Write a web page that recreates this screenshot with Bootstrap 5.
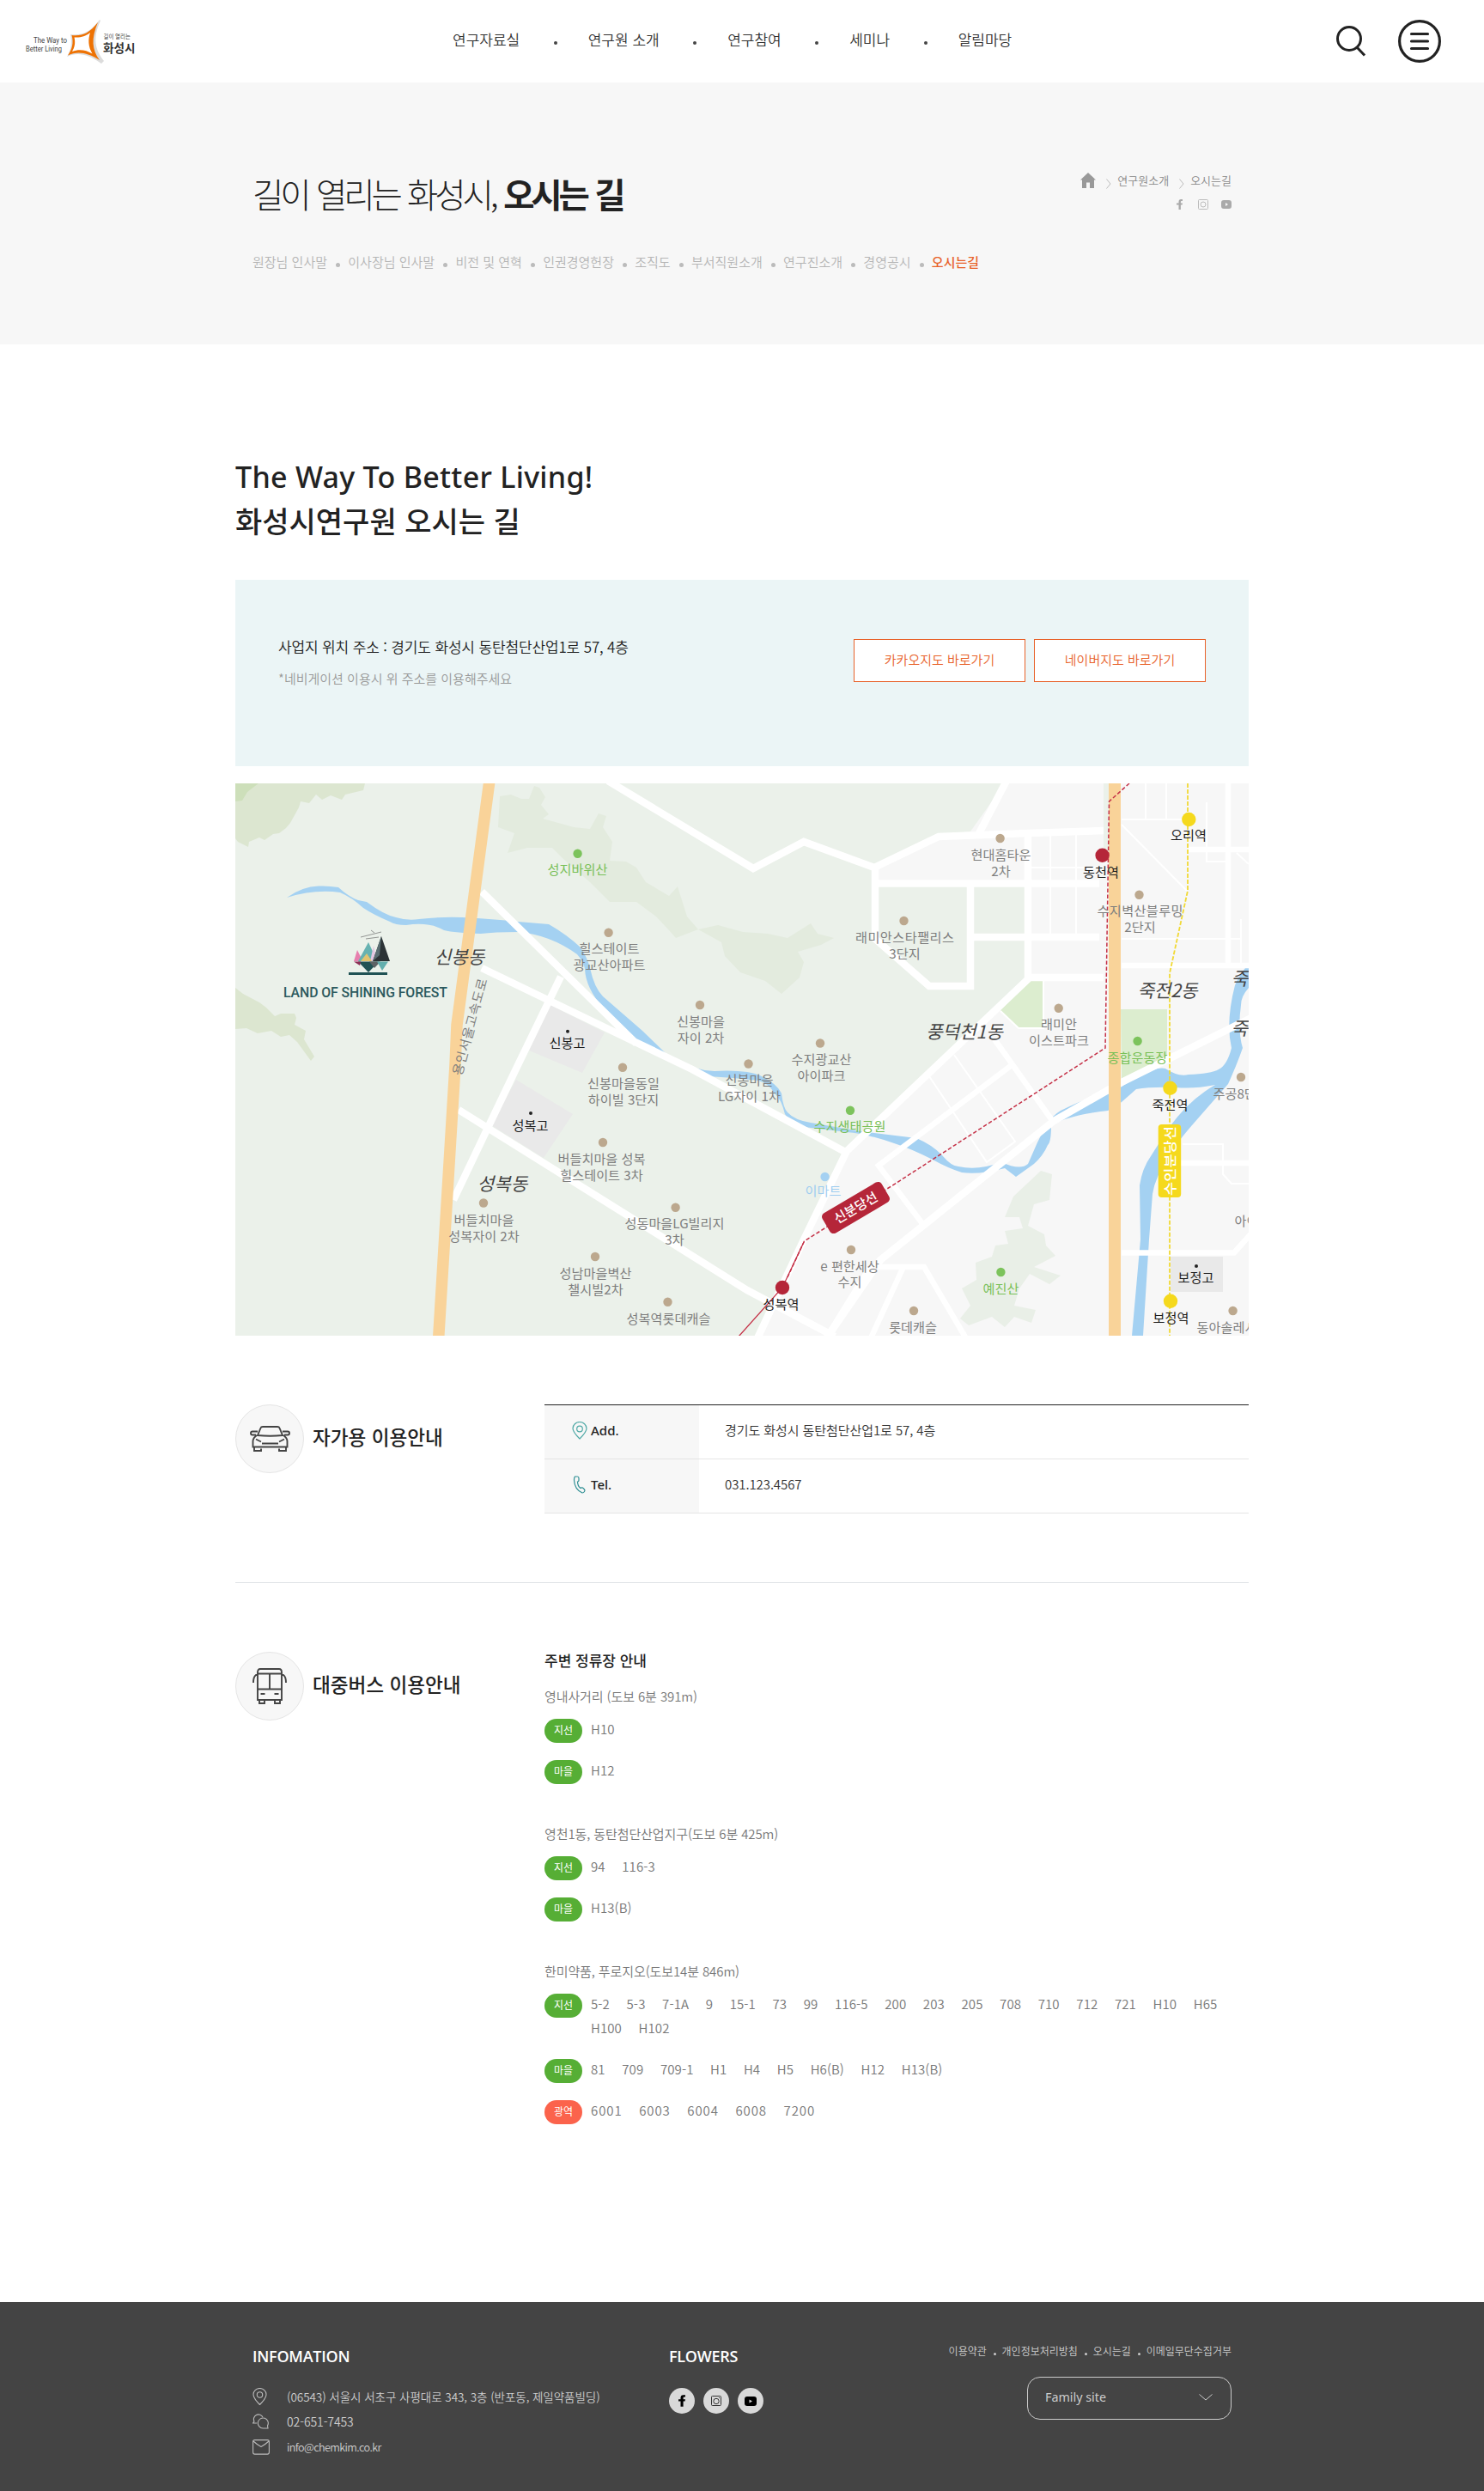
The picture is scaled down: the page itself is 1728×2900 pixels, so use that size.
<!DOCTYPE html>
<html lang="ko">
<head>
<meta charset="utf-8">
<meta name="viewport" content="width=device-width, initial-scale=1">
<title>화성시연구원 - 오시는 길</title>
<link href="https://cdn.jsdelivr.net/npm/bootstrap@5.3.0/dist/css/bootstrap.min.css" rel="stylesheet">
<style>
body{font-family:"Noto Sans CJK KR","Noto Sans",sans-serif;font-weight:350;font-size:15px;line-height:28px;color:#222;background:#fff}
a{color:inherit;text-decoration:none}
svg{display:block;flex:none}
.site-head{height:96px;padding:0 50px 0 28px}
.main-nav{margin:0 0 4px 367px;font-size:17px;color:#333}
.main-nav li+li:before,.sub-nav li+li:before{content:"";display:inline-block;border-radius:50%;vertical-align:middle}
.main-nav li+li:before{width:4px;height:4px;background:#444;margin:4px 36px 0 39.5px}
.hero{height:305px;background:#f7f7f7}
.inner{width:1140px}
.page{width:1180px}
.hero h1{font-size:39.5px;line-height:60px;font-weight:300;letter-spacing:-4.1px;word-spacing:2.5px;color:#222}
.hero h1 b{font-weight:700}
.sub-nav{color:#b5b5b5;margin-top:36px}
.sub-nav li+li:before{width:5px;height:5px;background:#bbb;margin:3px 9.3px 0 10px}
.sub-nav .on{color:#e8622a;font-weight:500}
.sub-nav .on:before{background:#bbb}
.crumbs{font-size:13px;line-height:20px;color:#888}
.lead-title{font-size:34px;line-height:50.5px;font-weight:500;padding-top:128px}
.lead-title .en{font-family:"Noto Sans",sans-serif;letter-spacing:.28px}
.addr{height:217px;background:#ebf5f6;padding:0 50px;margin-top:44px}
.addr .line1{font-size:17px;letter-spacing:-.15px}
.addr .line2{color:#999}
.btn-map{width:200px;height:50px;border:1px solid #e8622a;border-radius:0;background:#fff;color:#e8622a;font-size:15px;line-height:46px;padding:0;font-weight:350}
.btn-map:hover{background:#e8622a;color:#fff}
.map-view text{font-size:15.2px;fill:#7e7e7e;text-anchor:middle;font-weight:400}
.map-view .g{fill:#79c058}
.map-view .k{fill:#1d1d1d}
.map-view .d{font-size:21.2px;fill:#444;font-style:italic}
.map-view .w{fill:#fff;font-weight:500}
.map-view .s{text-anchor:start}
.way{width:360px;flex:none}
.way .disc{width:80px;height:80px;border-radius:50%;background:#f7f7f7;border:1px solid #e5e5e5;flex:none}
.way h3{font-size:22.6px;line-height:30px;font-weight:500;margin:0 0 5px 10px}
.info-row{height:63px;border-bottom:1px solid #e5e5e5;line-height:58px}
.info-row:first-child{height:64px;border-top:1px solid #222}
.info-row .lab{width:180px;background:#f7f7f7;padding:0 0 4px 32px;font-weight:500;font-family:"Noto Sans",sans-serif}
.info-row .val{padding-left:30px;color:#333;letter-spacing:-.08px}
.stops{color:#777}
.stops h4{font-size:17px;line-height:26px;font-weight:500;color:#222;margin:-3px 0 0}
.stops p{margin:15px 0 12px;line-height:28px;letter-spacing:-.1px}
.bus-row{margin-bottom:20px}
.tag{width:44px;height:28px;border-radius:14px;background:#56ae35;color:#fff;font-size:12px;line-height:25px;text-align:center;margin-right:10px;flex:none;font-weight:400}
.tag.red{background:#fb634c}
.bus-row ul{line-height:28px;margin:-2px 0 2px;column-gap:19.6px;letter-spacing:.1px}
.bus-row .wide{letter-spacing:.9px}
.site-foot{height:220px;background:#444;color:#ccc}
.site-foot h5{font-family:"Open Sans","Noto Sans",sans-serif;font-size:18px;line-height:24px;font-weight:600;color:#fff;letter-spacing:-.25px}
.foot-col1{width:485px;padding-top:51px}
.foot-col2{padding-top:51px}
.foot-col1 li{height:29.5px;line-height:28px}
.foot-col1 li svg{width:20px;margin-right:20px}
.sns{width:30px;height:30px;border-radius:50%;background:#d9d9d9}
.foot-links{font-size:12px;line-height:20px;margin-top:47px}
.foot-links li+li:before{content:"";display:inline-block;width:3px;height:3px;border-radius:50%;background:#ccc;margin:4px 6.900px 0 7.900px;vertical-align:middle}
.family{width:238px;height:50px;border:1px solid #ccc;border-radius:15px;padding:0 21px 2px 20px;font-family:"Noto Sans",sans-serif;font-size:14.3px;font-weight:400;margin-top:20px}
</style>
</head>
<body>
<header class="site-head d-flex align-items-center bg-white">
  <a href="#"><svg width="132" height="56" viewBox="28 20 132 56" font-family="Roboto,'Noto Sans CJK KR',sans-serif">
    <path d="M116 23C104 39 95 41 82 40C84 50 83 58 78 66C90 60 103 63 118 74L121 71C110 57 108 43 117 24Z" fill="#dcdcdc"/>
    <path d="M114 26C103 40 95 42 83.500 41C86 50 84 57 79 64.500C90 59 102 61 116 70C107 58 106 45 114 26Z" fill="#ee7203"/>
    <path d="M105 38C99 42.500 94 44 86.500 43.500C88 50 87 55 84 60C92 57 100 58 107.500 62.500C102.500 54 102.500 46 105 38Z" fill="#fff"/>
    <text x="39" y="49.500" font-size="8.500" font-weight="400" fill="#444" textLength="39" lengthAdjust="spacingAndGlyphs">The Way to</text>
    <text x="30" y="59.500" font-size="8.500" font-weight="400" fill="#444" textLength="42" lengthAdjust="spacingAndGlyphs">Better Living</text>
    <text x="120.500" y="44.500" font-size="7" fill="#444" textLength="31.500" lengthAdjust="spacingAndGlyphs" font-weight="400">길이 열리는</text>
    <text x="120" y="61" font-size="13.500" fill="#333" textLength="37.500" lengthAdjust="spacingAndGlyphs" font-weight="700">화성시</text>
  </svg></a>
  <ul class="main-nav list-unstyled d-flex"><li>연구자료실</li><li>연구원 소개</li><li>연구참여</li><li>세미나</li><li>알림마당</li></ul>
  <div class="d-flex align-items-center ms-auto" style="gap:37px">
    <svg width="36" height="38" viewBox="1555 29 36 38" fill="none" stroke="#222" stroke-width="3"><circle cx="1571" cy="45" r="13.500"/><path d="M1580 55l9 9.500"/></svg>
    <svg width="50" height="50" viewBox="0 0 50 50" fill="none" stroke="#222" stroke-width="3.200"><circle cx="25" cy="25" r="23.400"/><path d="M15.500 16.500h19M15.500 25h19M15.500 33.500h19" stroke-linecap="round"/></svg>
  </div>
</header>

<section class="hero">
  <div class="inner mx-auto d-flex justify-content-between">
    <div style="padding-top:99px">
      <h1 class="mb-0">길이 열리는 화성시, <b>오시는 길</b></h1>
      <ul class="sub-nav list-unstyled d-flex mb-0"><li>원장님 인사말</li><li>이사장님 인사말</li><li>비전 및 연혁</li><li>인권경영헌장</li><li>조직도</li><li>부서직원소개</li><li>연구진소개</li><li>경영공시</li><li class="on">오시는길</li></ul>
    </div>
    <div style="padding-top:104px">
      <div class="crumbs d-flex align-items-center">
        <svg width="18" height="18" viewBox="0 0 18 18" fill="#999"><path d="M9 0L18 8.500H16V18H11V11.500H7V18H2V8.500H0Z"/></svg>
        <svg class="mt-2" style="margin:0 7px 0 12px" width="6" height="12" viewBox="0 0 6 12" fill="none" stroke="#bbb"><path d="M.5.500L5 6L.5 11.500"/></svg>
        <span>연구원소개</span>
        <svg class="mt-2" style="margin:0 7px 0 12px" width="6" height="12" viewBox="0 0 6 12" fill="none" stroke="#bbb"><path d="M.5.500L5 6L.5 11.500"/></svg>
        <span>오시는길</span>
      </div>
      <div class="d-flex justify-content-end" style="margin-top:12px">
        <svg width="64" height="12" viewBox="0 0 64 12" fill="#aaa"><path d="M2.500 12V6.500H0V4.500H2.500V3Q2.500 0 5 0H7V2H5.700Q4.900 2 4.900 3V4.500H7L6.600 6.500H4.900V12Z"/><g fill="none" stroke="#bbb"><rect x="25.500" y=".5" width="11" height="11" rx="1"/><circle cx="31" cy="6" r="3"/></g><rect x="52" y="1" width="12" height="10" rx="3"/><path d="M57 4l3 2l-3 2z" fill="#f7f7f7"/></svg>
      </div>
    </div>
  </div>
</section>

<main class="page mx-auto">
  <h2 class="lead-title mb-0"><span class="en">The Way To Better Living!</span><br>화성시연구원 오시는 길</h2>
  <div class="addr d-flex justify-content-between">
    <div style="padding-top:64px"><div class="line1">사업지 위치 주소 : 경기도 화성시 동탄첨단산업1로 57, 4층</div><div class="line2" style="margin-top:9px">*네비게이션 이용시 위 주소를 이용해주세요</div></div>
    <div class="d-flex" style="gap:10px;padding-top:69px"><a class="btn btn-map" href="#">카카오지도 바로가기</a><a class="btn btn-map" href="#">네이버지도 바로가기</a></div>
  </div>

  <svg class="map-view" style="margin-top:20px" width="1180" height="643" viewBox="274 912 1180 643">
    <rect x="274" y="912" width="1180" height="643" fill="#f7f7f7"/>
    <path fill="#ebf1ea" d="M274 912H1170L1130 968L1093 972L1017 1008V1030H1194L1200 1140L985 1340L936 1443L883 1555H274ZM1285 912H1291V1000H1285Z"/>
    <path fill="#dce6d0" d="M274 912H425L423 920L402 925L398 931L385 926L375 931L368 925L360 935L350 933L348 940L338 958L333 964L325 970L318 971L308 978L302 975L290 980L289 986L277 980L274 976ZM274 1150L283 1157L302 1167L310 1173L320 1183L327 1180L343 1180L345 1185L343 1193L356 1200L354 1210L366 1230L362 1235L346 1213L337 1205L327 1207L316 1200L300 1203L287 1197L274 1198Z"/>
    <path fill="#cddfba" d="M274 912H301L288 922L282 932L274 933Z"/>
    <path fill="#e3ebde" d="M582 927L595 925L607 930L616 930L622 915L628 917L635 928L630 937L639 948L632 953L668 963L687 965L697 947L706 950L702 963L713 980L710 1002L729 1003L741 1010L752 1027L779 1043L789 1032L800 1067L813 1082L787 1092L779 1083L764 1067L741 1050L710 1050L687 1027L656 1000L643 987L614 987L591 993L599 970L580 963ZM813 1082L836 1077L865 1085L894 1087L917 1092L944 1075L952 1087L971 1092L956 1100L929 1108L936 1120L931 1138L910 1157L891 1142L862 1132L844 1113L840 1097Z"/>
    <path fill="#e9efe7" d="M1212 1363L1225 1367L1222 1397L1204 1402L1197 1427L1216 1437L1218 1450L1229 1462L1204 1475L1235 1485L1222 1495L1199 1483L1187 1500L1181 1520L1206 1525L1201 1540L1181 1533L1170 1545L1155 1533L1128 1543L1118 1535L1130 1520L1120 1500L1137 1490L1136 1470L1155 1463L1159 1450L1174 1448L1170 1433L1191 1430L1187 1417L1170 1417L1180 1393L1197 1377Z"/>
    <path fill="#e9e9e9" d="M641 1170L704 1202L678 1249L616 1223ZM601 1257L667 1297L633 1348L572 1310ZM1363 1463H1424V1504H1363Z"/>
    <path fill="#dcedcf" d="M1200 1142H1214V1196H1185L1165 1176ZM1305 1175H1359V1235L1306 1262Z"/>
    <path fill="#a4d1f2" d="M334 1045Q352 1032 371 1031.500Q382 1031 394 1033Q406 1044 417 1048L427 1050Q447 1065 461 1068Q474 1072 488 1070Q515 1067 538 1068Q575 1070 603 1073L639 1076Q660 1088 676 1103Q684 1115 687 1127Q692 1150 702 1160L748 1200L779 1230Q806 1246 832 1247Q870 1245 887 1253Q905 1262 910 1273Q912 1290 917 1295Q925 1304 944 1307L1002 1317L1067 1325Q1086 1333 1097 1345Q1108 1358 1116 1358Q1139 1363 1166 1353Q1188 1363 1197 1355L1208 1330L1218 1310Q1225 1299 1235 1293Q1266 1277 1290 1273L1306 1265Q1320 1256 1327 1253Q1348 1241 1357 1244Q1372 1254 1384 1251Q1410 1250 1419 1245Q1429 1240 1434 1220Q1427 1190 1438 1147Q1443 1135 1454 1122V1150Q1445 1160 1445 1170Q1441 1200 1447 1220Q1440 1240 1430 1262L1388 1310Q1368 1333 1361 1347Q1345 1370 1342 1390L1338 1443L1331 1555H1318L1328 1443L1327 1380Q1330 1360 1340 1346L1361 1313Q1385 1280 1415 1263Q1390 1268 1369 1266Q1340 1265 1323 1268Q1314 1276 1306 1283L1290 1293Q1245 1298 1224 1310Q1224 1330 1220 1333Q1215 1345 1204 1355L1183 1370L1170 1360Q1140 1368 1120 1365Q1104 1360 1086 1350Q1060 1337 1044 1332Q1010 1320 986 1318L936 1312Q918 1305 914 1297Q910 1280 902 1273Q895 1261 883 1258Q850 1254 821 1253Q800 1247 787 1238L741 1212L702 1173Q682 1150 681 1128Q680 1120 672 1111Q640 1088 603 1085Q575 1085 560 1087Q530 1086 517 1083Q500 1073 473 1077Q460 1077 454 1073Q435 1065 423 1057Q410 1045 396 1039Q366 1035 334 1045Z"/>
    <g fill="none" stroke="#fff" stroke-width="8.500">
      <path d="M708 909L877 1011L936 980L1018 1010L1093 974L1197 970L1285 967M1172 909L1139 972M1019 1010V1093L1082 1148H1130V1028M1019 1028.500H1280M1130 1091H1280M1197 970V1138H1285M1199 1138L986 1340L936 1443L881 1560"/>
      <path d="M561 1038L741 1215M561 1127L729 1208L806 1245L986 1342M653 1137L603 1240L568 1313L528 1397M534 1292L870 1502L972 1556"/>
      <path stroke-width="6.500" d="M1178 1240L1023 1357L1076 1427M1158 1210L1227 1307M1013 1475H1076L1126 1560M1051 1477L1013 1560M1430 912V1121M1306 1124H1454M1384 989H1454M1306 1458.500H1437L1457 1436M1375 1354H1454M1013 1475L963 1556"/>
      <path d="M1457 1185L1306 1260L1227 1305L1025 1467L961 1560"/>
      <path stroke-width="2" d="M1223 970V1088M1253 970V1088M1197 1010H1285M1082 1253L1149 1353L1182 1329L1111 1228M1306 954H1384M1334 912V955M1358 912V955M1306 960L1382 1037M1405 934V1003H1428M1306 1093H1445V1122M1445 1070V1093M1440 993L1454 1006M1377 1332H1424V1367L1434 1378H1454M1215 1142V1197H1186L1165 1177"/>
    </g>
    <g fill="none"><path stroke="#f9d399" stroke-width="13.500" d="M570.500 905L532 1193L530 1240L510.500 1560"/><path stroke="#f9d399" stroke-width="14" d="M1298 912V1555"/>
    <path stroke="#c53147" stroke-width="1.500" stroke-dasharray="4.500 2.500" d="M1315 912L1291.500 933L1287 1220L1044 1377L936.500 1445L917 1487"/><path stroke="#c53147" stroke-width="1.300" d="M936 1446L911 1499L860 1556"/>
    <path stroke="#f1d934" stroke-width="1.800" stroke-dasharray="5 2" d="M1383 912V1037L1362 1133V1555"/></g>
    <g fill="#bca88e"><circle cx="708.600" cy="1085.700" r="5.200"/><circle cx="815" cy="1170" r="5.200"/><circle cx="725" cy="1242.700" r="5.200"/><circle cx="871.500" cy="1238.500" r="5.200"/><circle cx="702" cy="1330" r="5.200"/><circle cx="563" cy="1400.500" r="5.200"/><circle cx="786.600" cy="1405.700" r="5.200"/><circle cx="693" cy="1463" r="5.200"/><circle cx="777.500" cy="1515.700" r="5.200"/><circle cx="1164.600" cy="976" r="5.200"/><circle cx="1052.500" cy="1072" r="5.200"/><circle cx="955" cy="1214.500" r="5.200"/><circle cx="1232.700" cy="1173.700" r="5.200"/><circle cx="1326.500" cy="1041.700" r="5.200"/><circle cx="991" cy="1455" r="5.200"/><circle cx="1064" cy="1526" r="5.200"/><circle cx="1445" cy="1254" r="5.200"/><circle cx="1435.600" cy="1526" r="5.200"/></g>
    <g fill="#7cc35c"><circle cx="672.600" cy="993.700" r="5.200"/><circle cx="1324.600" cy="1212" r="5.200"/><circle cx="990" cy="1292.700" r="5.200"/><circle cx="1165.400" cy="1481" r="5.200"/></g>
    <circle cx="960.600" cy="1370" r="5.200" fill="#a4d1f2"/>
    <g fill="#b52639"><circle cx="1283.600" cy="995.700" r="8.200"/><circle cx="911" cy="1499" r="8.200"/><rect x="-40" y="-13.500" width="80" height="27" rx="5" transform="translate(996.500 1406) rotate(-30.500)"/></g>
    <g fill="#f5d91d"><circle cx="1384.300" cy="954" r="8.200"/><circle cx="1362.500" cy="1266.700" r="8.200"/><circle cx="1363" cy="1514.700" r="8.200"/><rect x="1348.700" y="1309" width="26.500" height="85" rx="4"/></g>
    <g fill="#222"><circle cx="661" cy="1200.700" r="2"/><circle cx="618" cy="1296" r="2"/><circle cx="1393" cy="1474" r="2"/></g>
    <g transform="translate(-.5 0)">
    <text class="g" x="673" y="1018">성지바위산</text>
    <text x="710" y="1109.500">힐스테이트</text><text x="710" y="1128.500">광교산아파트</text>
    <text x="816.500" y="1194.500">신봉마을</text><text x="816.500" y="1213.500">자이 2차</text>
    <text class="k" x="661" y="1219.500">신봉고</text>
    <text x="726.500" y="1267">신봉마을동일</text><text x="726.500" y="1286">하이빌 3단지</text>
    <text x="873" y="1262.500">신봉마을</text><text x="873" y="1281.500">LG자이 1차</text>
    <text class="k" x="618" y="1315.500">성복고</text>
    <text x="701" y="1354.500">버들치마을 성복</text><text x="701" y="1373.500">힐스테이트 3차</text>
    <text class="d" x="585.500" y="1385.500">성복동</text><text class="d" x="535.500" y="1122">신봉동</text>
    <text x="564" y="1425.500">버들치마을</text><text x="564" y="1444.500">성복자이 2차</text>
    <text x="786" y="1429.500">성동마을LG빌리지</text><text x="786" y="1448.500">3차</text>
    <text x="694" y="1487.500">성남마을벽산</text><text x="694" y="1507">챌시빌2차</text>
    <text x="779" y="1540.500">성복역롯데캐슬</text>
    <text transform="translate(553 1197) rotate(-75)" x="0" y="0" textLength="116">용인서울고속도로</text>
    <text x="1166" y="1000.500">현대홈타운</text><text x="1166" y="1019.500">2차</text>
    <text x="1054" y="1096.500" textLength="115">래미안스타팰리스</text><text x="1054" y="1115.500">3단지</text>
    <text x="957" y="1238.500">수지광교산</text><text x="957" y="1257.500">아이파크</text>
    <text x="1233.500" y="1198">래미안</text><text x="1233.500" y="1217">이스트파크</text>
    <text x="1328" y="1066" textLength="100">수지벽산블루밍</text><text x="1328" y="1085">2단지</text>
    <text class="k" x="1384.500" y="978">오리역</text><text class="k" x="1282.500" y="1020.500">동천역</text>
    <text class="d" x="1360" y="1160.500">죽전2동</text><text class="d" x="1123.500" y="1209">풍덕천1동</text>
    <text class="g" x="1325" y="1237">종합운동장</text>
    <text class="d s" x="1434" y="1147">죽</text><text class="d s" x="1434" y="1205">죽</text>
    <text class="g" x="990" y="1317">수지생태공원</text>
    <text x="959" y="1392" style="fill:#9fcdf0">이마트</text>
    <text class="w" transform="translate(997 1406) rotate(-30.500)" x="0" y="5.500">신분당선</text>
    <text x="990" y="1479.500">e 편한세상</text><text x="990" y="1498">수지</text>
    <text class="k" x="910" y="1523.500">성복역</text><text x="1063.600" y="1550.500">롯데캐슬</text>
    <text class="g" x="1166" y="1505.500">예진산</text><text class="k" x="1363" y="1291.500">죽전역</text>
    <text class="s" x="1413" y="1278.500">주공8단지</text>
    <text class="w" transform="translate(1362.500 1351.500) rotate(-90)" x="0" y="5.500" textLength="81" lengthAdjust="spacingAndGlyphs">수인분당선</text>
    <text class="s" x="1438" y="1426.500">아이파크</text><text class="k" x="1393" y="1493">보정고</text>
    <text class="k" x="1364" y="1539.500">보정역</text><text class="s" x="1394" y="1550.500">동아솔레시티</text>
    </g>
    <g><path fill="#e77fae" d="M412 1119L416 1106L421 1116V1119Z"/><path fill="#66b2b1" d="M417 1119L429 1097L437 1114L433 1119Z"/><path fill="#e4c8e2" d="M431 1119L435 1101L439 1119Z"/><path fill="#2c3336" d="M434 1119L444 1090L454 1119Z"/><path fill="#5a6e72" d="M434 1119L444 1090L442 1112Z"/><path fill="#e1c36f" d="M420 1119L427 1110L433 1119Z"/><path fill="#205254" d="M417 1119.500H441L429 1132Z"/><path fill="#8c2f56" d="M412 1119.500H420L419 1124Z"/><path fill="#5d6264" d="M430 1119.500H443L436 1127Z"/><path fill="#63afae" d="M439 1119.500H452L445 1130Z"/><path fill="#205254" d="M406 1132H451V1135H406Z"/><path d="M420 1091L444 1085M426 1093L441 1091M432 1083L436 1086" stroke="#555" stroke-width=".6"/></g>
    <text class="s" x="330" y="1161" textLength="191" style="fill:#2b5a5e;font:500 15.800px Roboto,sans-serif">LAND OF SHINING FOREST</text>
  </svg>

  <section class="d-flex border-bottom" style="padding-top:80px;height:288px">
    <div class="way d-flex"><span class="disc d-flex align-items-center justify-content-center">
      <svg width="47" height="30" viewBox="0 0 47 30" fill="none" stroke="#444" stroke-width="1.900"><path d="M9 11L12.500 2.500Q13 1 15 1H32Q34 1 34.500 2.500L38 11Q23.500 12.500 9 11ZM9 6.500H3Q1 6.500 1 8.500T3 10.500H7M38 6.500H44Q46 6.500 46 8.500T44 10.500H40M8 11Q3.500 14 3.500 18V24.500H43.500V18Q43.500 14 39 11M5 24.500V29H13V26.500M42 24.500V29H34V26.500M7 15.500L13 18.500M40 15.500L34 18.500M14 20.500H33"/></svg></span>
      <div class="d-flex align-items-center" style="height:80px"><h3>자가용 이용안내</h3></div></div>
    <div class="flex-fill">
      <div class="info-row d-flex"><div class="lab d-flex align-items-center"><svg class="me-1" width="18" height="21" viewBox="0 0 18 21" fill="none" stroke="#4fa9a6" stroke-width="1.200"><path d="M9 20Q1 12 1 8A8 7.500 0 0 1 17 8Q17 12 9 20Z"/><circle cx="9" cy="8.500" r="3.300"/></svg>Add.</div><div class="val">경기도 화성시 동탄첨단산업1로 57, 4층</div></div>
      <div class="info-row d-flex"><div class="lab d-flex align-items-center"><svg class="me-1" width="18" height="21" viewBox="0 0 18 21" fill="none" stroke="#2f8f94" stroke-width="1.200"><path d="M3.500 1H6.500Q8 1 8 3V5Q8 7 6.500 7Q6.500 12 10 14.500Q11 13.500 12.500 14L14.500 16Q15.500 17 14.500 18.500T12 20Q3 16 2.500 5Q2.500 2 3.500 1Z"/></svg>Tel.</div><div class="val">031.123.4567</div></div>
    </div>
  </section>

  <section class="d-flex" style="padding-top:80px;height:837px">
    <div class="way d-flex"><span class="disc d-flex align-items-center justify-content-center">
      <svg width="40" height="42" viewBox="0 0 40 42" fill="none" stroke="#444" stroke-width="1.900"><path d="M6 37V5Q6 1 9 1H31Q34 1 34 5V37ZM6 6.500H34M6 24.500H34M20 6.500V24.500M9.500 30H14.500M25.500 30H30.500M8 37V41H14V37M26 37V41H32V37M6 8H4Q1 10 1 17M34 8H36Q39 10 39 17"/></svg></span>
      <div class="d-flex align-items-center" style="height:80px"><h3>대중버스 이용안내</h3></div></div>
    <div class="stops flex-fill">
      <h4>주변 정류장 안내</h4>
      <p>영내사거리 (도보 6분 391m)</p>
      <div class="bus-row d-flex"><span class="tag">지선</span><ul class="list-unstyled d-flex flex-wrap"><li>H10</li></ul></div>
      <div class="bus-row d-flex"><span class="tag">마을</span><ul class="list-unstyled d-flex flex-wrap"><li>H12</li></ul></div>
      <p style="margin-top:44px">영천1동, 동탄첨단산업지구(도보 6분 425m)</p>
      <div class="bus-row d-flex"><span class="tag">지선</span><ul class="list-unstyled d-flex flex-wrap"><li>94</li><li>116-3</li></ul></div>
      <div class="bus-row d-flex"><span class="tag">마을</span><ul class="list-unstyled d-flex flex-wrap"><li>H13(B)</li></ul></div>
      <p style="margin-top:44px">한미약품, 푸로지오(도보14분 846m)</p>
      <div class="bus-row d-flex"><span class="tag">지선</span><ul class="list-unstyled d-flex flex-wrap pe-3"><li>5-2</li><li>5-3</li><li>7-1A</li><li>9</li><li>15-1</li><li>73</li><li>99</li><li>116-5</li><li>200</li><li>203</li><li>205</li><li>708</li><li>710</li><li>712</li><li>721</li><li>H10</li><li>H65</li><li>H100</li><li>H102</li></ul></div>
      <div class="bus-row d-flex"><span class="tag">마을</span><ul class="list-unstyled d-flex flex-wrap"><li>81</li><li>709</li><li>709-1</li><li>H1</li><li>H4</li><li>H5</li><li>H6(B)</li><li>H12</li><li>H13(B)</li></ul></div>
      <div class="bus-row d-flex"><span class="tag red">광역</span><ul class="wide list-unstyled d-flex flex-wrap"><li>6001</li><li>6003</li><li>6004</li><li>6008</li><li>7200</li></ul></div>
    </div>
  </section>
</main>

<footer class="site-foot">
  <div class="inner mx-auto d-flex">
    <div class="foot-col1">
      <h5 style="margin-bottom:20px">INFOMATION</h5>
      <ul class="list-unstyled mb-0">
        <li class="d-flex align-items-center" style="font-size:13.5px;letter-spacing:-.05px"><svg height="20" viewBox="0 0 20 20" fill="none" stroke="#bbb" stroke-width="1.100"><path d="M8.500 19.500Q1 12 1 7.500A7.500 7 0 0 1 16 7.500Q16 12 8.500 19.500Z"/><circle cx="8.500" cy="8" r="3.200"/></svg>(06543) 서울시 서초구 사평대로 343, 3층 (반포동, 제일약품빌딩)</li>
        <li class="d-flex align-items-center" style="font-size:14px;letter-spacing:-.1px"><svg height="18" viewBox="0 0 20 18" fill="none" stroke="#bbb" stroke-width="1.100"><path d="M12 4A5.500 5.500 0 1 0 2 9L.5 11H5M18 17H12.500A6 6 0 1 1 17.500 14Z"/></svg>02-651-7453</li>
        <li class="d-flex align-items-center" style="font-size:12.6px;letter-spacing:-.6px"><svg height="18" viewBox="0 0 20 18" fill="none" stroke="#bbb" stroke-width="1.100"><rect x=".6" y=".6" width="18.800" height="16.500" rx="2"/><path d="M1 2Q6 6.500 10 8.500Q14 6.500 19 2"/></svg>info@chemkim.co.kr</li>
      </ul>
    </div>
    <div class="foot-col2">
      <h5 style="margin-bottom:25px">FLOWERS</h5>
      <div class="d-flex" style="gap:10px">
        <span class="sns d-flex align-items-center justify-content-center"><svg width="8" height="14" viewBox="0 0 7 12"><path d="M2.200 12V6.500H0V4.500H2.200V3Q2.200 0 5 0H7V2H5.700Q4.900 2 4.900 3V4.500H7L6.600 6.500H4.900V12Z"/></svg></span>
        <span class="sns d-flex align-items-center justify-content-center"><svg width="12" height="12" viewBox="0 0 12 12" fill="none" stroke="#333"><rect x=".5" y=".5" width="11" height="11" rx="1"/><circle cx="6" cy="6.500" r="3.200"/><path d="M9 2.500h1"/></svg></span>
        <span class="sns d-flex align-items-center justify-content-center"><svg width="14" height="11" viewBox="0 0 14 11"><rect width="14" height="11" rx="3"/><path d="M5.500 3.500l3.500 2l-3.500 2z" fill="#d9d9d9"/></svg></span>
      </div>
    </div>
    <div class="ms-auto d-flex flex-column align-items-end">
      <ul class="foot-links list-unstyled d-flex mb-0"><li>이용약관</li><li>개인정보처리방침</li><li>오시는길</li><li>이메일무단수집거부</li></ul>
      <div class="family d-flex align-items-center justify-content-between">Family site<svg width="16" height="8" viewBox="0 0 16 8" fill="none" stroke="#ccc"><path d="M.5.500L8 7L15.500.500"/></svg></div>
    </div>
  </div>
</footer>
<script src="https://cdn.jsdelivr.net/npm/bootstrap@5.3.0/dist/js/bootstrap.bundle.min.js"></script>
</body>
</html>
